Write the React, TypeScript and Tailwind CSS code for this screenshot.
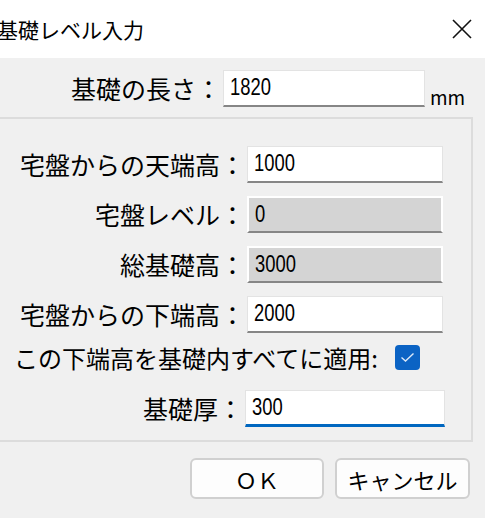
const jp = "font-['Noto_Sans_CJK_JP',sans-serif]";
const num = "font-['Liberation_Sans',sans-serif]";

function Field({
  value,
  disabled,
  focused,
  width = "w-[196px]",
}: {
  value: string;
  disabled?: boolean;
  focused?: boolean;
  width?: string;
}) {
  let box = "border border-[#e3e3e3] border-b-2 border-b-[#868686] bg-white";
  if (disabled) box = "border-2 border-white border-b-[#868686] bg-[#d4d4d4]";
  if (focused) box = "border border-[#e3e3e3] border-b-[3px] border-b-[#0067c0] bg-white";
  return (
    <div className={`${width} h-[37px] ${box} flex items-center pl-[6px] pb-[3px]`}>
      {/* narrow, tall digits like the Windows UI font */}
      <span className={`${num} inline-block origin-left scale-x-[0.8] scale-y-[1.08] text-[23px] leading-none text-black`}>
        {value}
      </span>
    </div>
  );
}

function Row({ label, value, disabled }: { label: string; value: string; disabled?: boolean }) {
  return (
    <div className="flex items-center">
      <div className={`w-[249px] pr-[2px] text-right text-[25px] leading-none whitespace-nowrap ${jp}`}>
        {label}
      </div>
      <Field value={value} disabled={disabled} />
    </div>
  );
}

export default function App() {
  return (
    <div className="w-[485px] h-[518px] overflow-hidden bg-[#f0f0f0] flex flex-col text-black">
      {/* title bar */}
      <div className="h-[58px] bg-white flex items-center justify-between shrink-0">
        <span className={`-ml-[3px] text-[21px] leading-none ${jp}`}>基礎レベル入力</span>
        <svg width="20" height="20" viewBox="0 0 20 20" className="mr-[13px]">
          <path d="M1 1 L19 19 M19 1 L1 19" stroke="#111" strokeWidth="1.6" />
        </svg>
      </div>

      {/* length */}
      <div className="mt-[12px] flex">
        <div className={`w-[223px] pr-[2px] pt-[6px] text-right text-[25px] leading-none whitespace-nowrap ${jp}`}>
          基礎の長さ：
        </div>
        <Field value="1820" width="w-[202px]" />
        <span className={`ml-[5px] self-end mb-[1px] text-[19px] leading-none ${jp}`}>mm</span>
      </div>

      {/* group box */}
      <div className="mt-[10px] -ml-[4px] w-[477px] border-2 border-[#dcdcdc] pt-[27px] pb-[13px] flex flex-col">
        <div className="flex flex-col gap-[13px]">
          <Row label="宅盤からの天端高：" value="1000" />
          <Row label="宅盤レベル：" value="0" disabled />
          <Row label="総基礎高：" value="3000" disabled />
          <Row label="宅盤からの下端高：" value="2000" />
        </div>
        <div className="mt-[12px] flex items-center h-[25px]">
          <span className={`w-[380px] text-right text-[24px] leading-none whitespace-nowrap ${jp}`}>
            この下端高を基礎内すべてに適用:
          </span>
          <div className="ml-[17px] w-[25px] h-[25px] rounded-[4px] bg-[#0b63c4] flex items-center justify-center">
            <svg width="15" height="11" viewBox="0 0 15 11">
              <path d="M1.5 5.5 L5.5 9 L13.5 1.5" fill="none" stroke="#dce9f8" strokeWidth="1.4" />
            </svg>
          </div>
        </div>
        <div className="mt-[20px] flex items-center">
          <div className={`w-[247px] pr-[2px] text-right text-[25px] leading-none whitespace-nowrap ${jp}`}>
            基礎厚：
          </div>
          <Field value="300" focused width="w-[200px]" />
        </div>
      </div>

      {/* buttons */}
      <div className="mt-[16px] flex justify-end gap-[11px] pr-[15px]">
        <button className={`w-[134px] h-[41px] rounded-[6px] border-2 border-[#d0d0d0] bg-[#fdfdfd] text-[22px] leading-none ${jp}`}>
          ＯＫ
        </button>
        <button className={`w-[135px] h-[41px] rounded-[6px] border-2 border-[#d0d0d0] bg-[#fdfdfd] text-[22px] leading-none ${jp}`}>
          キャンセル
        </button>
      </div>
    </div>
  );
}
